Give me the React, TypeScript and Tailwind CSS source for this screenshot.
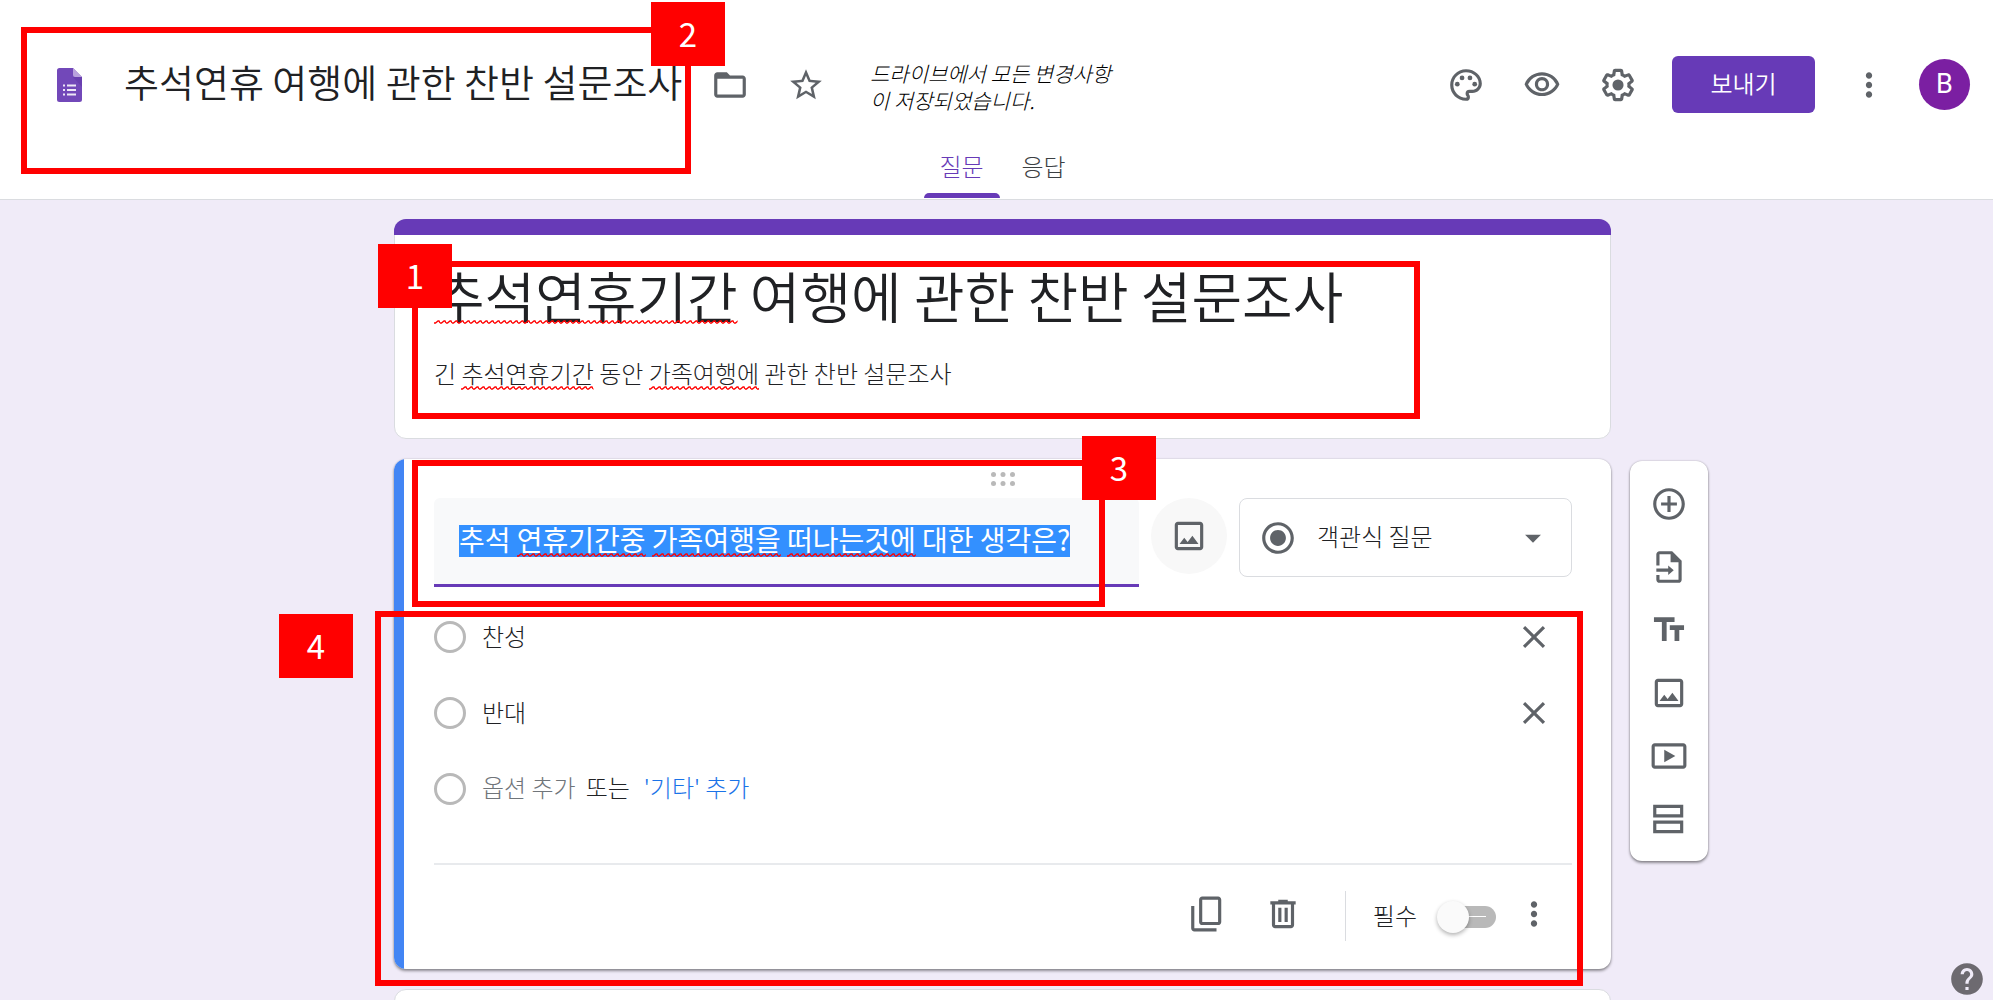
import type { ReactNode } from "react";
import {
  MdAddCircleOutline,
  MdArrowDropDown,
  MdClose,
  MdFolderOpen,
  MdHelp,
  MdMoreVert,
  MdOutlineImage,
  MdOutlinePalette,
  MdOutlineVisibility,
  MdRadioButtonChecked,
  MdStarBorder,
  MdTextFields,
} from "react-icons/md";

const ICON = "size-[38px] shrink-0 fill-current";

function Svg({ children }: { children: ReactNode }) {
  return (
    <svg viewBox="0 0 24 24" className={ICON} aria-hidden="true">
      {children}
    </svg>
  );
}

function FormLogo() {
  return (
    <svg viewBox="0 0 25 34" className="h-[34px] w-[25px] shrink-0" aria-hidden="true">
      <path d="M2.500 0H16l9 9v22.500a2.500 2.500 0 0 1-2.500 2.500h-20A2.500 2.500 0 0 1 0 31.500v-29A2.500 2.500 0 0 1 2.500 0z" fill="#7248b9" />
      <path d="M16 9h9v10z" fill="#5f36a8" opacity=".5" />
      <path d="M16 0l9 9h-7a2 2 0 0 1-2-2z" fill="#b9a2dd" />
      <path d="M6 16.500h2v2H6zM6 21h2v2H6zM6 25.500h2v2H6zM10 16.500h9v2h-9zM10 21h9v2h-9zM10 25.500h9v2h-9z" fill="#ede7f6" />
    </svg>
  );
}

function GearIcon() {
  return (
    <Svg>
      <path d="M13.850 22.250h-3.700c-.74 0-1.360-.54-1.450-1.270l-.27-1.890c-.27-.14-.53-.29-.79-.46l-1.800.72c-.7.26-1.470-.03-1.810-.65L2.200 15.530c-.35-.66-.2-1.440.36-1.880l1.530-1.190c-.01-.15-.02-.3-.02-.46 0-.15.01-.31.02-.46l-1.520-1.190c-.59-.45-.74-1.260-.37-1.880l1.850-3.190c.34-.62 1.110-.9 1.790-.63l1.810.73c.26-.17.52-.32.78-.46l.27-1.910c.09-.7.71-1.250 1.440-1.250h3.700c.74 0 1.360.54 1.450 1.270l.27 1.890c.27.14.53.29.79.46l1.800-.72c.71-.26 1.480.03 1.820.65l1.840 3.180c.36.66.2 1.440-.36 1.880l-1.520 1.190c.01.15.02.3.02.46s-.01.31-.02.46l1.520 1.190c.56.45.72 1.230.37 1.860l-1.860 3.220c-.34.62-1.110.9-1.800.63l-1.800-.72c-.26.17-.52.32-.78.46l-.27 1.910c-.1.68-.72 1.220-1.460 1.220zm-3.230-2h2.760l.37-2.550.53-.22c.44-.18.88-.44 1.340-.78l.45-.34 2.380.96 1.380-2.400-2.030-1.580.07-.56c.03-.26.06-.51.06-.78s-.03-.53-.06-.78l-.07-.56 2.030-1.580-1.390-2.400-2.390.96-.45-.35c-.42-.32-.87-.58-1.330-.77l-.52-.22-.37-2.550h-2.760l-.37 2.550-.53.21c-.44.19-.88.44-1.340.79l-.45.33-2.380-.95-1.390 2.390 2.030 1.580-.07.56a7 7 0 0 0-.06.79c0 .26.02.53.06.78l.07.56-2.030 1.580 1.380 2.400 2.390-.96.45.35c.43.33.86.58 1.330.77l.53.22z" />
      <circle cx="12" cy="12" r="3.5" />
    </Svg>
  );
}

function ImportIcon() {
  return (
    <Svg>
      <path d="M4 11V4c0-1.100.9-2 2-2h8l6 6v12c0 1.100-.9 2-2 2H6c-1.100 0-2-.9-2-2v-3h2v3h12V9h-5V4H6v7z" />
      <path d="M4 13h7.500v-2l3.500 3-3.500 3v-2H4z" />
    </Svg>
  );
}

function VideoIcon() {
  return (
    <Svg>
      <path d="M21 4H3c-1.100 0-2 .9-2 2v12c0 1.100.9 2 2 2h18c1.100 0 2-.9 2-2V6c0-1.100-.9-2-2-2zm0 14H3V6h18v12zM9 8v8l7-4z" />
    </Svg>
  );
}

function SectionIcon() {
  return (
    <Svg>
      <path d="M2 3v8h19V3H2zm17 6H4V5h15v4zM2 13v8h19v-8H2zm17 6H4v-4h15v4z" />
    </Svg>
  );
}

function CopyIcon() {
  return (
    <Svg>
      <path d="M19 1H9c-1.100 0-2 .9-2 2v14c0 1.100.9 2 2 2h10c1.100 0 2-.9 2-2V3c0-1.100-.9-2-2-2zm0 16H9V3h10v14zM4 7H2v14c0 1.100.9 2 2 2h14v-2H4z" />
    </Svg>
  );
}

function TrashIcon() {
  return (
    <Svg>
      <path d="M15 4V3H9v1H4v2h1v13c0 1.100.9 2 2 2h10c1.100 0 2-.9 2-2V6h1V4h-5zm2 15H7V6h10v13zM9 8h2v9H9zm4 0h2v9h-2z" />
    </Svg>
  );
}

function IconButton({ label, children }: { label: string; children: ReactNode }) {
  return (
    <button type="button" aria-label={label} className="flex h-[57px] w-[76px] shrink-0 items-center justify-center">
      {children}
    </button>
  );
}

/* Advance widths of the Korean face, in em. */
const textWidth = (text: string) =>
  [...text].reduce((sum, ch) => sum + (ch === " " ? 0.224 : ch === "?" ? 0.474 : 0.92), 0);

function Squiggles({ text, words, id }: { text: string; words: string[]; id: string }) {
  return (
    <span aria-hidden="true" className="pointer-events-none absolute inset-0">
      {words.map((word) => (
        <svg
          key={word}
          height="4"
          className="absolute bottom-0"
          style={{
            left: `${textWidth(text.slice(0, text.indexOf(word)))}em`,
            width: `${textWidth(word)}em`,
          }}
        >
          <defs>
            <pattern id={`${id}-${words.indexOf(word)}`} width="6" height="4" patternUnits="userSpaceOnUse">
              <path d="M0 3L1.500 3L4 1L5 1L6 3" fill="none" stroke="#f00" strokeWidth="1.300" />
            </pattern>
          </defs>
          <rect width="100%" height="4" fill={`url(#${id}-${words.indexOf(word)})`} />
        </svg>
      ))}
    </span>
  );
}

function Badge({ n, className }: { n: number; className: string }) {
  return (
    <span
      className={`absolute z-20 flex h-[64px] w-[74px] items-center justify-center bg-[#f00] text-[33px] text-white ${className}`}
    >
      {n}
    </span>
  );
}

function Frame({ className }: { className: string }) {
  return <span aria-hidden="true" className={`pointer-events-none absolute z-10 border-6 border-[#f00] ${className}`} />;
}

function Option({ value }: { value: string }) {
  return (
    <div className="flex h-[76px] items-center">
      <input
        type="radio"
        name="answer"
        aria-label={value}
        className="size-[32px] shrink-0 appearance-none rounded-full border-3 border-[#b9b9b9]"
      />
      <input
        type="text"
        defaultValue={value}
        aria-label={`옵션 ${value}`}
        className="ml-4 h-11 min-w-0 flex-1 bg-transparent pb-1 text-[24px] text-[#202124] outline-none"
      />
      <IconButton label={`${value} 삭제`}>
        <MdClose className={ICON} />
      </IconButton>
    </div>
  );
}

const TITLE = "추석연휴기간 여행에 관한 찬반 설문조사";
const DESCRIPTION = "긴 추석연휴기간 동안 가족여행에 관한 찬반 설문조사";
const QUESTION = "추석 연휴기간중 가족여행을 떠나는것에 대한 생각은?";

function Header() {
  return (
    <header className="relative flex h-[200px] shrink-0 flex-col justify-between border-b border-[#dadce0] bg-white pt-[56px]">
      <div className="flex h-[57px] items-center pr-[23px] pl-[57px]">
        <FormLogo />
        <input
          type="text"
          aria-label="문서 제목"
          defaultValue="추석연휴 여행에 관한 찬반 설문조사"
          className="ml-[42px] h-16 w-[568px] min-w-0 bg-transparent pb-2 text-[38px] font-[350] text-[#202124] outline-none"
        />
        <IconButton label="폴더로 이동">
          <MdFolderOpen className={ICON} />
        </IconButton>
        <IconButton label="별표">
          <MdStarBorder className={ICON} />
        </IconButton>
        <p className="ml-[26px] w-[250px] pt-1 text-[21px] leading-[27px] font-light text-black italic">
          드라이브에서 모든 변경사항이 저장되었습니다.
        </p>
        <div className="ml-auto flex items-center">
          <IconButton label="테마 맞춤설정">
            <MdOutlinePalette className={ICON} />
          </IconButton>
          <IconButton label="미리보기">
            <MdOutlineVisibility className={ICON} />
          </IconButton>
          <IconButton label="설정">
            <GearIcon />
          </IconButton>
          <button
            type="button"
            className="mx-4 h-[57px] w-[143px] rounded-md bg-[#673ab7] pb-1 text-[24px] font-[350] text-white"
          >
            보내기
          </button>
          <IconButton label="더보기">
            <MdMoreVert className={ICON} />
          </IconButton>
          <button
            type="button"
            aria-label="계정"
            className="ml-3 size-[51px] rounded-full bg-[#7b1fa2] font-[Roboto,sans-serif] text-[27px] text-white"
          >
            B
          </button>
        </div>
      </div>
      <nav role="tablist" className="flex justify-center gap-[6px] pb-px pl-3 text-[24px] font-light">
        <button
          type="button"
          role="tab"
          aria-selected="true"
          className="flex h-[60px] w-[76px] flex-col items-center justify-between pt-[10px] text-[#673ab7]"
        >
          질문
          <span className="h-[5px] w-full shrink-0 rounded-t-md bg-[#673ab7]" />
        </button>
        <button
          type="button"
          role="tab"
          aria-selected="false"
          className="flex h-[60px] w-[76px] flex-col items-center pt-[10px] text-[#3c4043]"
        >
          응답
        </button>
      </nav>
      <Frame className="top-[27px] left-[21px] h-[147px] w-[670px]" />
      <Badge n={2} className="top-[2px] left-[651px]" />
    </header>
  );
}

function TitleCard() {
  return (
    <section className="relative h-[220px] shrink-0 rounded-xl border border-[#dadce0] bg-white">
      <div className="-mx-px -mt-px h-4 rounded-t-xl bg-[#673ab7]" />
      <div className="pr-10 pl-[39px]">
        <div className="relative mt-[25px] h-[64px] text-[55px] font-[350]">
          <input
            type="text"
            aria-label="설문지 제목"
            defaultValue={TITLE}
            className="block h-full w-full bg-transparent pt-1 text-[#202124] outline-none"
          />
          <Squiggles id="title" text={TITLE} words={["추석연휴기간"]} />
        </div>
        <div className="relative mt-[34px] h-8 text-[24px] leading-8 font-light">
          <input
            type="text"
            aria-label="설문지 설명"
            defaultValue={DESCRIPTION}
            className="block h-full w-full bg-transparent pb-1 text-[#202124] outline-none"
          />
          <Squiggles id="description" text={DESCRIPTION} words={["추석연휴기간", "가족여행에"]} />
        </div>
      </div>
      <Frame className="top-[41px] left-[17px] h-[158px] w-[1008px]" />
      <Badge n={1} className="top-[24px] left-[-17px]" />
    </section>
  );
}

function QuestionCard() {
  return (
    <section className="relative h-[510px] shrink-0 rounded-xl bg-white shadow-[0_2px_3px_rgba(0,0,0,0.4),0_0_2px_rgba(0,0,0,0.2)]">
      <div className="flex h-full overflow-hidden rounded-xl">
        <div className="w-[10px] shrink-0 bg-[#4285f4]" />
        <div className="flex min-w-0 flex-1 flex-col pr-[39px] pl-[30px]">
          <button type="button" aria-label="질문 이동" className="mx-auto flex h-[39px] shrink-0 items-center">
            <svg viewBox="0 0 24 14" className="h-[14px] w-6 fill-[#b9b9b9]" aria-hidden="true">
              {[2.5, 12, 21.5].map((x) =>
                [2.5, 11.5].map((y) => <circle key={`${x}-${y}`} cx={x} cy={y} r="2.500" />),
              )}
            </svg>
          </button>
          <div className="flex items-start">
            <div className="flex h-[89px] min-w-0 flex-1 items-center rounded-t-md border-b-3 border-[#673ab7] bg-[#f8f9fa] px-[25px]">
              <div className="relative h-8 w-full text-[28px] leading-8">
                <span
                  aria-hidden="true"
                  className="absolute inset-y-0 left-0 bg-[#3390ff]"
                  style={{ width: `${textWidth(QUESTION)}em` }}
                />
                <input
                  type="text"
                  aria-label="질문"
                  defaultValue={QUESTION}
                  className="relative block h-full w-full bg-transparent pb-1 text-white outline-none"
                />
                <Squiggles id="question" text={QUESTION} words={["연휴기간중", "가족여행을", "떠나는것에"]} />
              </div>
            </div>
            <button
              type="button"
              aria-label="이미지 추가"
              className="mx-3 flex size-[76px] shrink-0 items-center justify-center rounded-full bg-[#f8f8f8]"
            >
              <MdOutlineImage className={ICON} />
            </button>
            <div className="relative flex h-[79px] w-[333px] shrink-0 items-center">
              <select
                aria-label="질문 유형"
                className="h-full w-full appearance-none rounded-lg border border-[#dadce0] bg-white pb-1 pl-[77px] text-[24px] font-light text-[#202124]"
              >
                <option>객관식 질문</option>
              </select>
              <MdRadioButtonChecked className="pointer-events-none absolute left-5 size-[38px]" />
              <MdArrowDropDown className="pointer-events-none absolute right-5 size-[38px]" />
            </div>
          </div>
          <div className="mt-3 font-light">
            <Option value="찬성" />
            <Option value="반대" />
            <div className="flex h-[76px] items-center text-[24px]">
              <input
                type="radio"
                name="answer"
                aria-label="새 옵션"
                className="size-[32px] shrink-0 appearance-none rounded-full border-3 border-[#b9b9b9]"
              />
              <button type="button" className="ml-4 pb-1 text-[#70757a]">
                옵션 추가
              </button>
              <span className="ml-[10px] pb-1 text-[#202124]">또는</span>
              <button type="button" className="ml-[14px] pb-1 text-[#1a73e8]">
                '기타' 추가
              </button>
            </div>
          </div>
          <div className="mt-9 flex flex-1 items-start justify-end border-t-2 border-[#e8eaed] pt-5">
            <IconButton label="복사">
              <CopyIcon />
            </IconButton>
            <IconButton label="삭제">
              <TrashIcon />
            </IconButton>
            <span className="mt-[6px] ml-6 h-[50px] w-px bg-[#dadce0]" />
            <label className="mt-[3px] ml-[27px] flex h-[57px] items-center gap-5 text-[24px] font-light text-[#202124]">
              <span className="pb-1">필수</span>
              <input type="checkbox" role="switch" className="peer sr-only" />
              <span className="flex h-8 w-[59px] items-center">
                <span className="relative z-1 size-8 shrink-0 rounded-full bg-[#fafafa] shadow-[0_2px_4px_rgba(0,0,0,0.3)]" />
                <span className="-ml-6 flex h-[22px] w-[51px] items-center justify-end rounded-full bg-[#b9b9b9] pr-[10px]">
                  <span className="h-px w-5 bg-white" />
                </span>
              </span>
            </label>
            <IconButton label="옵션 더보기">
              <MdMoreVert className={ICON} />
            </IconButton>
          </div>
        </div>
      </div>
      <Frame className="top-px left-[18px] h-[147px] w-[693px]" />
      <Badge n={3} className="top-[-23px] left-[688px]" />
      <Frame className="top-[152px] left-[-19px] h-[375px] w-[1208px]" />
      <Badge n={4} className="top-[155px] left-[-115px]" />
    </section>
  );
}

function Toolbar() {
  const items: [string, ReactNode][] = [
    ["질문 추가", <MdAddCircleOutline className={ICON} />],
    ["질문 가져오기", <ImportIcon />],
    ["제목 및 설명 추가", <MdTextFields className={ICON} />],
    ["이미지 추가", <MdOutlineImage className={ICON} />],
    ["동영상 추가", <VideoIcon />],
    ["섹션 추가", <SectionIcon />],
  ];
  return (
    <div
      role="toolbar"
      aria-label="항목 추가"
      className="ml-[19px] flex w-[78px] flex-col rounded-xl bg-white py-[11px] shadow-[0_2px_3px_rgba(0,0,0,0.4),0_0_2px_rgba(0,0,0,0.25)]"
    >
      {items.map(([label, icon]) => (
        <button key={label} type="button" aria-label={label} className="flex h-[63px] items-center justify-center">
          {icon}
        </button>
      ))}
    </div>
  );
}

export default function App() {
  return (
    <div className="relative flex h-screen flex-col overflow-hidden bg-[#f0ebf8] font-['Noto_Sans_CJK_KR',sans-serif] text-[#5f6368]">
      <Header />
      <main className="flex min-h-0 flex-1 pl-3">
        <div className="flex-1" />
        <div className="flex w-full max-w-[1217px] flex-col gap-5 pt-[19px]">
          <TitleCard />
          <QuestionCard />
          <section className="h-[220px] shrink-0 rounded-xl border border-[#dadce0] bg-white" />
        </div>
        <div className="flex-1 pt-[261px]">
          <Toolbar />
        </div>
      </main>
      <a href="#help" aria-label="도움말" className="absolute right-[7px] bottom-[2px] text-[#6d6a70]">
        <MdHelp className={ICON} />
      </a>
    </div>
  );
}
